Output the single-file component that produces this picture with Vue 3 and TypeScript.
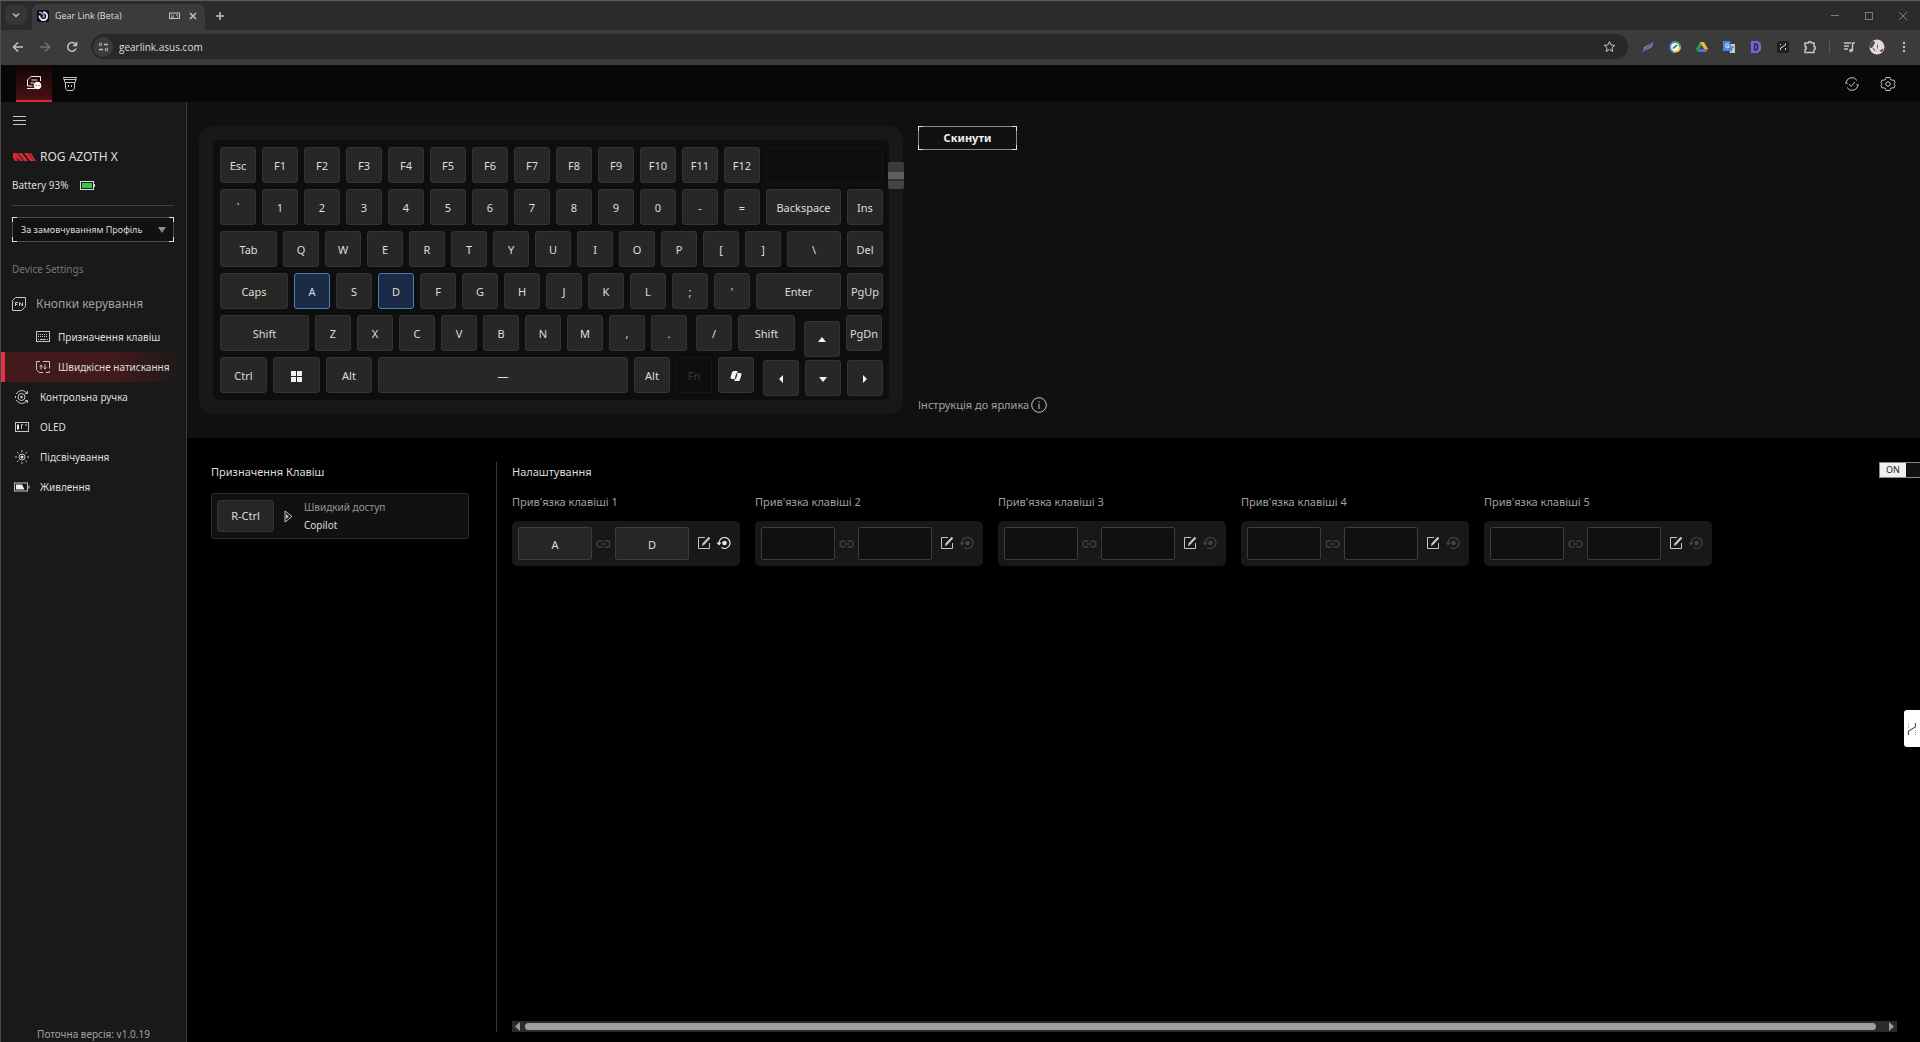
<script setup lang="ts">
import { ref } from 'vue'

interface Key {
  label: string
  width?: number
  kind?: 'win' | 'copilot' | 'up' | 'down' | 'left' | 'right' | 'blank' | 'disabled'
  spaced?: boolean
}

const plain = (labels: string): Key[] => labels.split(' ').map((label) => ({ label }))

const rows: Key[][] = [
  [...plain('Esc F1 F2 F3 F4 F5 F6 F7 F8 F9 F10 F11 F12'), { label: 'OLED', width: 117, kind: 'blank' }],
  [...plain('` 1 2 3 4 5 6 7 8 9 0 - ='), { label: 'Backspace', width: 75 }, { label: 'Ins' }],
  [{ label: 'Tab', width: 57 }, ...plain('Q W E R T Y U I O P [ ]'), { label: '\\', width: 54 }, { label: 'Del' }],
  [{ label: 'Caps', width: 68 }, ...plain("A S D F G H J K L ; '"), { label: 'Enter', width: 85 }, { label: 'PgUp' }],
  [
    { label: 'Shift', width: 89 },
    ...plain('Z X C V B N M , .'),
    { label: '/', spaced: true },
    { label: 'Shift', width: 57 },
    { label: 'Вгору', kind: 'up', spaced: true },
    { label: 'PgDn' },
  ],
  [
    { label: 'Ctrl', width: 47 },
    { label: 'Windows', width: 47, kind: 'win' },
    { label: 'Alt', width: 46 },
    { label: '—', width: 250 },
    { label: 'Alt' },
    { label: 'Fn', kind: 'disabled' },
    { label: 'Copilot', kind: 'copilot' },
    { label: 'Ліворуч', kind: 'left', spaced: true },
    { label: 'Униз', kind: 'down' },
    { label: 'Праворуч', kind: 'right' },
  ],
]

const arrows: Record<string, string> = {
  up: 'M2 8 6 3l4 5z',
  down: 'M2 4l4 5 4-5z',
  left: 'M8 2 4 6l4 4z',
  right: 'M4 2l4 4-4 4z',
}

const pairs = [
  { id: 1, a: 'A', b: 'D' },
  { id: 2, a: '', b: '' },
  { id: 3, a: '', b: '' },
  { id: 4, a: '', b: '' },
  { id: 5, a: '', b: '' },
]

const bound = (label: string) => pairs.some((p) => p.a === label || p.b === label)

const url = ref('gearlink.asus.com')
const enabled = ref(true)
</script>

<template>
  <div class="window">
    <header class="tabstrip">
      <button class="tab-search" aria-label="Пошук вкладок">
        <svg width="10" height="10" viewBox="0 0 10 10"><path d="M2 3.5 5 6.5 8 3.5" class="line bold" /></svg>
      </button>
      <div class="tab">
        <svg width="12" height="12" viewBox="0 0 12 12">
          <rect width="12" height="12" rx="2" fill="#08060f" />
          <path d="M2.500 5.500v2L5 10h3l2-2V4.500L8 2.500H6" fill="none" stroke="#e9e6f5" stroke-width="1.800" />
          <path d="M2 2.500h2L7 5.500V7H5.500" fill="none" stroke="#b79bf0" stroke-width="1.300" />
        </svg>
        <span class="tab-title">Gear Link (Beta)</span>
        <svg width="11" height="8" viewBox="0 0 11 8">
          <rect x=".5" y="1" width="10" height="5.500" class="line" />
          <path d="M2 3h1M4 3h1M2 5h3M7 3h2M8 5h1" class="line" />
        </svg>
        <button class="bare tab-close" aria-label="Закрити вкладку">
          <svg width="8" height="8" viewBox="0 0 8 8"><path d="M1 1l6 6M7 1 1 7" class="line bold" /></svg>
        </button>
      </div>
      <button class="bare new-tab" aria-label="Нова вкладка">
        <svg width="10" height="10" viewBox="0 0 10 10"><path d="M5 1v8M1 5h8" class="line bold" /></svg>
      </button>
      <div class="window-controls">
        <button class="bare" aria-label="Згорнути"><svg width="10" height="10" viewBox="0 0 10 10"><path d="M1 4.500h8" class="line" /></svg></button>
        <button class="bare" aria-label="Розгорнути"><svg width="10" height="10" viewBox="0 0 10 10"><rect x="1.500" y="1.500" width="7" height="7" class="line" /></svg></button>
        <button class="bare" aria-label="Закрити"><svg width="10" height="10" viewBox="0 0 10 10"><path d="M1 1l8 8M9 1 1 9" class="line" /></svg></button>
      </div>
    </header>

    <nav class="toolbar">
      <button class="bare" aria-label="Назад"><svg width="12" height="12" viewBox="0 0 12 12"><path d="M11 6H2M6 1.500 1.500 6 6 10.500" class="line bold" /></svg></button>
      <button class="bare faded" aria-label="Вперед"><svg width="12" height="12" viewBox="0 0 12 12"><path d="M1 6h9M6 1.500 10.500 6 6 10.500" class="line bold" /></svg></button>
      <button class="bare" aria-label="Оновити"><svg width="12" height="12" viewBox="0 0 12 12"><path d="M10 7.500A4.300 4.300 0 1 1 9.200 3L10.300 4.200M10.500 1v3.500H7" class="line bold" /></svg></button>
      <div class="address">
        <button class="site-info" aria-label="Відомості про сайт">
          <svg width="11" height="10" viewBox="0 0 11 10">
            <circle cx="2.500" cy="2.500" r="1.300" class="line" /><path d="M6 2.500h4M1 7.500h4" class="line bold" /><circle cx="8.500" cy="7.500" r="1.300" class="line" />
          </svg>
        </button>
        <input v-model="url" aria-label="Адреса" spellcheck="false" />
        <button class="bare star" aria-label="Додати закладку">
          <svg width="13" height="13" viewBox="0 0 13 13"><path d="M6.500 1.500 8 5l3.800.300-2.900 2.500.9 3.700-3.300-2-3.300 2 .9-3.700L1.200 5.300 5 5z" class="line" /></svg>
        </button>
      </div>
      <div class="extensions">
        <button class="bare" aria-label="Перо"><svg width="14" height="14" viewBox="0 0 14 14"><path d="M1.500 12 3 7l9.500-5-1.500 5-6 3.500z" fill="#8f6cae" /><path d="M1 13 10 4" stroke="#55406b" /></svg></button>
        <button class="bare" aria-label="Перевірка">
          <svg width="14" height="14" viewBox="0 0 14 14">
            <path d="M7 7V1a6 6 0 0 1 6 6z" fill="#3fae6b" /><path d="M7 7h6a6 6 0 0 1-9 5z" fill="#f0c24b" /><path d="M7 7l-3 5A6 6 0 0 1 7 1z" fill="#3b8be0" />
            <circle cx="7" cy="7" r="4" fill="#f2f2ea" /><path d="M5 8.500 9 5" stroke="#415161" stroke-width="1.500" />
          </svg>
        </button>
        <button class="bare" aria-label="Диск">
          <svg width="14" height="14" viewBox="0 0 14 14"><path d="M5 2h4L5 8.500 3 12 1 9z" fill="#2f9e58" /><path d="M5 2h4l4 7H9z" fill="#f2b72e" /><path d="M3 12 5 9h8l-2 3z" fill="#3c7de0" /><path d="M9 9h4l-2 3z" fill="#dd4b3e" /></svg>
        </button>
        <button class="bare" aria-label="Перекладач">
          <svg width="14" height="14" viewBox="0 0 14 14"><path d="M6 4h7v9H8z" fill="#c8ccd2" /><path d="M1 1h7l2 10H1z" fill="#4a86e0" /><path d="M7 4.500A2 2 0 1 0 7 7V6H5" fill="none" stroke="#e8effb" /><path d="M9 7h3M11 7l-2 3" stroke="#667" /></svg>
        </button>
        <button class="bare" aria-label="Нотатки"><svg width="14" height="14" viewBox="0 0 14 14"><path d="M2 1h7l3 3v6l-3 3H2z" fill="#7764dc" /><path d="M5.500 4h2l1 1.500v3l-1 1.500h-2z" fill="none" stroke="#2b2748" stroke-width="1.500" /></svg></button>
        <button class="bare" aria-label="Розширення"><svg width="14" height="14" viewBox="0 0 14 14"><rect x="1" y="1" width="12" height="12" rx="2" fill="#1d2025" /><path d="M4.500 4v1M4.500 10V8l5-3V3.500M9.500 8v2" fill="none" stroke="#e2e2e2" /></svg></button>
        <button class="bare" aria-label="Усі розширення"><svg width="14" height="14" viewBox="0 0 14 14"><path d="M2 3h3.500a1.500 1.500 0 0 1 3 0H11v3.500a1.500 1.500 0 0 1 0 3V12.500H2V9.500a1.500 1.500 0 0 0 0-3z" class="line bold" /></svg></button>
        <span class="separator"></span>
        <button class="bare" aria-label="Медіа"><svg width="13" height="12" viewBox="0 0 13 12"><path d="M1 2h7M1 5h5M1 8h4M9.500 9.500V2H12" class="line bold" /><circle cx="8" cy="9.500" r="1.800" fill="#c2c2c2" /></svg></button>
        <button class="bare" aria-label="Профіль">
          <svg width="16" height="16" viewBox="0 0 16 16"><circle cx="8" cy="8" r="7.500" fill="#e0dbd9" /><path d="M1 6c1-3 2-4 4-4l1 2-3 5C1 9 0 8 1 6z" fill="#5a4444" /><path d="M8 5l1 2-1 4z" fill="#4a4143" /><path d="M4 9l2 3" stroke="#a03a3f" /><path d="M10.500 12l4-3-1.500 4z" fill="#4a4143" /></svg>
        </button>
        <button class="bare" aria-label="Меню"><svg width="4" height="12" viewBox="0 0 4 12" fill="#c2c2c2"><circle cx="2" cy="2" r="1.200" /><circle cx="2" cy="6" r="1.200" /><circle cx="2" cy="10" r="1.200" /></svg></button>
      </div>
    </nav>

    <header class="app-bar">
      <button class="app-tab current" aria-label="Пристрої">
        <svg width="16" height="16" viewBox="0 0 16 16">
          <path d="M6.500 11H1.500V5L5 1.500h9.500V6M1 13.500h8M5.500 5H11M4.500 8H8" class="line white" />
          <circle cx="11.500" cy="10.500" r="3.800" fill="#f4f4f4" /><path d="M9.500 10.500h1M12.500 10.500h1" stroke="#7a1a20" />
        </svg>
      </button>
      <button class="app-tab" aria-label="Прошивка">
        <svg width="16" height="16" viewBox="0 0 16 16"><path d="M1.500 1.500h13L13 6.500H3zM2 3.500h12M3.500 6.500h9v6L11 14.500H5l-1.500-2zM6.500 9v2M9.500 9v2" class="line" /></svg>
      </button>
      <div class="app-actions">
        <button class="bare" aria-label="Оновлення">
          <svg width="16" height="16" viewBox="0 0 16 16"><path d="M2 6.500A6 6 0 0 1 13 4.500M14 9.500A6 6 0 0 1 3 11.500M1 7.500l1.500-1 1 1.500M15 8.500l-1.500 1-1-1.500M5 8l2 2.500L11 6" class="line" /></svg>
        </button>
        <button class="bare" aria-label="Параметри">
          <svg width="16" height="16" viewBox="0 0 16 16"><path d="M6 1.500h4l.5 2 2 .800 1.500-.300 1 2.500-1.200 1.500 1.200 1.500-1 2.500-1.500-.300-2 .800-.5 2H6l-.5-2-2-.800-1.500.300-1-2.500L2.200 8 1 6.500 2 4l1.500.300 2-.800z" class="line" /><circle cx="8" cy="8" r="2.300" class="line" /></svg>
        </button>
      </div>
    </header>

    <div class="body">
      <aside class="sidebar">
        <button class="bare burger" aria-label="Згорнути меню"><svg width="13" height="11" viewBox="0 0 13 11"><path d="M0 1.500h13M0 5.500h13M0 9.500h13" class="line" /></svg></button>
        <h1 class="device">
          <svg width="24" height="10" viewBox="0 0 24 10" fill="#d9273a"><path d="M1 1h4l6 8H8L4 5l2 4H3L1 6z" /><path d="M6 1h4l6 8h-4z" /><path d="M12 1h4l6 8h-4z" /><path d="M17 1h2l5 8h-2z" /></svg>
          ROG AZOTH X
        </h1>
        <p class="battery">
          Battery 93%
          <svg width="15" height="9" viewBox="0 0 15 9"><rect x=".5" y=".5" width="13" height="8" fill="none" stroke="#ddd" /><rect x="2" y="2" width="10" height="5" fill="#35c84d" /><path d="M14.500 3v3" stroke="#ddd" /></svg>
        </p>
        <hr />
        <div class="profile corners">
          <select aria-label="Профіль"><option>За замовчуванням Профіль</option></select>
          <svg width="8" height="6" viewBox="0 0 8 6"><path d="M0 0h8L4 6z" fill="#8d8d8d" /></svg>
        </div>
        <h2 class="section">Device Settings</h2>
        <nav class="menu">
          <a href="#keys" class="group">
            <svg width="14" height="14" viewBox="0 0 14 14"><path d="M3.500.5h10v9l-4 4h-9v-10z" class="line" /><path d="M3.500 9V5.500H6M3.500 7.300h2M7.500 9V5.500l3 3.500V5.500" class="line" /></svg>
            Кнопки керування
          </a>
          <a href="#assign" class="sub">
            <svg width="14" height="12" viewBox="0 0 14 12"><rect x=".5" y=".5" width="13" height="10" class="line" /><path d="M2 3.500h10M2 5.500h10" class="line" stroke-dasharray="1 1" /><path d="M2 8.500h1M4 8.500h6M11 8.500h1" class="line" /></svg>
            Призначення клавіш
          </a>
          <a href="#speed" class="sub active">
            <svg width="14" height="12" viewBox="0 0 14 12"><path d="M4 .5H.5v8l2.500 3h4M7 .5h6.500v7M10 11.500h3.500V10" class="line" /><path d="M5 8.500V4M3.500 5.500 5 4l1.500 1.500M9 3.500V8M7.500 6.500 9 8l1.500-1.500" class="line" /></svg>
            Швидкісне натискання
          </a>
          <a href="#knob">
            <svg width="16" height="14" viewBox="0 0 16 14"><circle cx="7.500" cy="7" r="3.500" class="line" /><circle cx="7.500" cy="7" r="1.200" fill="#ddd" /><path d="M2 4Q7-2.500 13 3M2 10q5 6.500 11 1M13.500 1v2.500H11M13.500 13v-2.500H11M1.500 6v2" class="line" /></svg>
            Контрольна ручка
          </a>
          <a href="#oled">
            <svg width="16" height="10" viewBox="0 0 16 10"><rect x="1.500" y=".5" width="13" height="9" class="line" /><path d="M4 2.500v5" stroke="#eee" stroke-width="2" /><path d="M7.500 7V2.500H9M11 3h2" class="line" /></svg>
            OLED
          </a>
          <a href="#light">
            <svg width="16" height="14" viewBox="0 0 16 14"><circle cx="8" cy="7" r="3" class="line" /><circle cx="8" cy="7" r="1.500" fill="#eee" /><path d="M8 0v2M8 12v2M1 7h2M13 7h2M3 2l1.500 1.500M13 2l-1.500 1.500M3 12l1.500-1.500M13 12l-1.500-1.500" class="line" /></svg>
            Підсвічування
          </a>
          <a href="#power">
            <svg width="16" height="10" viewBox="0 0 16 10"><rect x=".5" y="1" width="13" height="8" class="line" /><path d="M2 2.500h6L10.500 7.500H2z" fill="#eee" /><path d="M15 3.500v3" class="line" /></svg>
            Живлення
          </a>
        </nav>
        <p class="version">Поточна версія: v1.0.19</p>
      </aside>

      <main class="content">
        <section class="stage">
          <div class="keyboard">
            <div class="plate">
              <div v-for="(row, r) in rows" :key="r" class="row">
                <button
                  v-for="(key, k) in row"
                  :key="k"
                  class="key"
                  :class="[key.kind, { spaced: key.spaced, bound: bound(key.label) }]"
                  :style="key.width ? { width: key.width + 'px' } : undefined"
                  :aria-label="key.label"
                  :disabled="key.kind === 'disabled' || key.kind === 'blank'"
                >
                  <svg v-if="key.kind === 'win'" width="11" height="11" viewBox="0 0 11 11" fill="#efefef"><path d="M0 0h5v5H0zM6 0h5v5H6zM0 6h5v5H0zM6 6h5v5H6z" /></svg>
                  <svg v-else-if="key.kind === 'copilot'" width="12" height="12" viewBox="0 0 12 12" fill="#f4f4f4">
                    <path d="M3.500 1h4.200L5.500 9H2Q0 9 .600 7L2 2.500Q2.500 1 3.500 1z" /><path d="M8.500 11H4.300L6.500 3H10q2 0 1.400 2L10 9.500Q9.500 11 8.500 11z" />
                    <path d="M7 3.500 5.300 8.800" stroke="#2a2a2a" stroke-width="1.300" />
                  </svg>
                  <svg v-else-if="key.kind && arrows[key.kind]" width="12" height="12" viewBox="0 0 12 12"><path :d="arrows[key.kind]" fill="#f2f2f2" /></svg>
                  <template v-else-if="key.kind !== 'blank'">{{ key.label }}</template>
                </button>
              </div>
            </div>
            <span class="dial"></span>
          </div>
          <div class="stage-side">
            <button class="reset corners">Скинути</button>
            <p class="guide">
              Інструкція до ярлика
              <svg width="16" height="16" viewBox="0 0 16 16"><circle cx="8" cy="8" r="7.300" class="line" /><path d="M8 6.500V12M8 4v1.200" class="line" /></svg>
            </p>
          </div>
        </section>

        <section class="panels">
          <div class="assigned">
            <h2>Призначення Клавіш</h2>
            <div class="shortcut">
              <span class="cap">R-Ctrl</span>
              <svg width="9" height="13" viewBox="0 0 9 13"><path d="M1 1l7 5.500L1 12z" class="line" /><path d="M2 4v5l3-2.500z" fill="#c4c4c4" /></svg>
              <div>
                <p class="dim">Швидкий доступ</p>
                <p>Copilot</p>
              </div>
            </div>
          </div>
          <div class="settings">
            <div class="settings-head">
              <h2>Налаштування</h2>
              <label class="toggle"><input v-model="enabled" type="checkbox" /><span>ON</span></label>
            </div>
            <div class="pairs">
              <div v-for="pair in pairs" :key="pair.id" class="pair">
                <h3>Прив'язка клавіші {{ pair.id }}</h3>
                <div class="pair-box">
                  <button class="slot" :class="{ filled: pair.a }" :aria-label="'Перша клавіша ' + pair.id">{{ pair.a }}</button>
                  <svg class="chain" width="15" height="10" viewBox="0 0 15 10"><path d="M6.500 2H4a3 3 0 0 0 0 6h2.500M8.500 2H11a3 3 0 0 1 0 6H8.500M5 5h5" /></svg>
                  <button class="slot" :class="{ filled: pair.b }" :aria-label="'Друга клавіша ' + pair.id">{{ pair.b }}</button>
                  <button class="bare edit" aria-label="Редагувати"><svg width="14" height="14" viewBox="0 0 14 14"><path d="M8 1.500H1.500v11h11V7" class="line" /><path d="M6 8.500 12.500 1.500" stroke="#c9c9c9" stroke-width="2.200" /><path d="M4.800 10l.7-2 1.300 1.200z" fill="#c9c9c9" /></svg></button>
                  <button class="bare revert" :class="{ off: !pair.a }" aria-label="Скинути пару">
                    <svg width="16" height="14" viewBox="0 0 16 14"><path d="M3 7A5.500 5.500 0 1 1 5.500 11.600" fill="none" stroke="currentColor" stroke-width="1.200" /><path d="M.500 6.500h5L3 9.500z" fill="currentColor" /><circle cx="8.500" cy="7" r="2.300" fill="currentColor" /></svg>
                  </button>
                </div>
              </div>
            </div>
            <div class="scroller">
              <svg width="7" height="9" viewBox="0 0 7 9"><path d="M6 0v9L1 4.500z" fill="#9a9a9a" /></svg>
              <span class="thumb"></span>
              <svg width="7" height="9" viewBox="0 0 7 9"><path d="M1 0v9l5-4.500z" fill="#9a9a9a" /></svg>
            </div>
          </div>
        </section>
      </main>
    </div>

    <button class="side-tab" aria-label="Бічна панель">
      <svg width="10" height="14" viewBox="0 0 10 14"><path d="M1.500 13V9L8.500 5V1" fill="none" stroke="#555" stroke-width="1.200" /><path d="M1.500 1v6M8.500 8v5" stroke="#999" stroke-dasharray="1 1" /></svg>
    </button>
  </div>
</template>

<style>
html,
body {
  margin: 0;
  background: #000;
}
</style>

<style scoped>
* {
  box-sizing: border-box;
}

.window {
  position: relative;
  display: flex;
  flex-direction: column;
  height: 100vh;
  overflow: hidden;
  border-top: 1px solid #5b5e5e;
  border-left: 1px solid #4a4a4a;
  background: #000;
  color: #dedede;
  font: 12px/16px 'Noto Sans', 'Open Sans', sans-serif;
}

h1, h2, h3, p, hr {
  margin: 0;
  font-weight: 400;
}

button, input, select {
  margin: 0;
  padding: 0;
  border: 0;
  background: none;
  color: inherit;
  font: inherit;
}

svg {
  flex: none;
}

a {
  color: inherit;
  text-decoration: none;
}

.line {
  fill: none;
  stroke: #c4c4c4;
  stroke-width: 1;
}

.bold {
  stroke-width: 1.5;
}

.white {
  stroke: #f0f0f0;
}

.bare {
  display: flex;
  align-items: center;
  justify-content: center;
}

.tabstrip {
  display: flex;
  height: 29px;
  background: #2b2b2b;
}

.tab-search {
  display: flex;
  align-items: center;
  justify-content: center;
  width: 22px;
  height: 20px;
  margin: 4px 5px 0 4px;
  border-radius: 7px;
  background: #363636;
}

.tab {
  display: flex;
  align-items: center;
  gap: 6px;
  width: 173px;
  height: 26px;
  margin-top: 3px;
  padding: 0 5px 2px 5px;
  border-radius: 7px 7px 0 0;
  background: #3b3b3b;
  font-family: 'Open Sans', 'Noto Sans', sans-serif;
  font-size: 9px;
}

.tab-title {
  flex: 1;
}

.tab-close {
  width: 14px;
}

.new-tab {
  width: 30px;
}

.window-controls {
  display: flex;
  margin-left: auto;
}

.window-controls .bare {
  width: 34px;
}

.window-controls .line {
  stroke: #7c7c7c;
}

.toolbar {
  display: flex;
  align-items: center;
  height: 35px;
  padding: 0 3px 2px 3px;
  background: #3b3b3b;
}

.toolbar > .bare {
  width: 27px;
  height: 27px;
}

.faded {
  opacity: 0.4;
}

.address {
  display: flex;
  flex: 1;
  align-items: center;
  gap: 6px;
  height: 25px;
  margin: 0 6px;
  padding: 0 12px 0 2px;
  border-radius: 13px;
  background: #282828;
  font-family: 'Open Sans', 'Noto Sans', sans-serif;
  font-size: 10px;
}

.site-info {
  display: flex;
  align-items: center;
  justify-content: center;
  width: 20px;
  height: 20px;
  border-radius: 50%;
  background: #3b3b3b;
}

.address input {
  flex: 1;
  outline: 0;
}

.extensions {
  display: flex;
  align-items: center;
}

.extensions .bare {
  width: 27px;
  height: 27px;
}

.separator {
  width: 1px;
  height: 12px;
  margin: 0 6px;
  background: #5c5c5c;
}

.app-bar {
  display: flex;
  height: 37px;
  padding: 0 14px 0 15px;
  background: #070707;
}

.app-tab {
  display: flex;
  align-items: center;
  justify-content: center;
  width: 36px;
}

.app-tab.current {
  border-bottom: 2px solid #d42a3b;
  background: linear-gradient(#100506, #4a1015);
}

.app-actions {
  display: flex;
  margin-left: auto;
}

.app-actions .bare {
  width: 36px;
}

.body {
  display: flex;
  flex: 1;
  min-height: 0;
}

.sidebar {
  display: flex;
  flex: none;
  flex-direction: column;
  width: 186px;
  padding-top: 13px;
  border-right: 1px solid #3a3a3a;
  background: #191919;
}

.burger {
  width: 13px;
  height: 11px;
  margin-left: 12px;
}

.device {
  display: flex;
  align-items: center;
  gap: 4px;
  height: 18px;
  margin: 22px 0 0 11px;
  font-size: 12px;
}

.battery {
  display: flex;
  align-items: center;
  gap: 11px;
  margin: 11px 0 0 11px;
  font-size: 10px;
}

.sidebar hr {
  height: 1px;
  margin: 12px 12px 0 11px;
  border: 0;
  background: #404040;
}

.corners {
  --tip: linear-gradient(#e2e2e2, #e2e2e2);
  --edge: linear-gradient(#4c4c4c, #4c4c4c);
  background:
    var(--tip) 0 0 / 5px 1px,
    var(--tip) 0 0 / 1px 5px,
    var(--tip) 100% 0 / 5px 1px,
    var(--tip) 100% 0 / 1px 5px,
    var(--tip) 0 100% / 5px 1px,
    var(--tip) 0 100% / 1px 5px,
    var(--tip) 100% 100% / 5px 1px,
    var(--tip) 100% 100% / 1px 5px,
    var(--edge) 0 0 / 100% 1px,
    var(--edge) 0 100% / 100% 1px,
    var(--edge) 0 0 / 1px 100%,
    var(--edge) 100% 0 / 1px 100%;
  background-color: #111;
  background-repeat: no-repeat;
}

.profile {
  display: flex;
  align-items: center;
  height: 25px;
  margin: 11px 12px 0 11px;
  padding: 1px 8px 0 9px;
  font-size: 9px;
}

.profile select {
  flex: 1;
  min-width: 0;
  appearance: none;
  outline: 0;
}

.section {
  margin: 19px 0 0 11px;
  color: #777;
  font-size: 10px;
}

.menu {
  display: flex;
  flex-direction: column;
  margin-top: 9px;
  font-size: 10px;
}

.menu a {
  display: flex;
  align-items: center;
  gap: 10px;
  height: 30px;
  padding-left: 13px;
}

.menu .group {
  height: 36px;
  padding-left: 11px;
  color: #a0a0a0;
  font-size: 12px;
}

.menu .sub {
  gap: 8px;
  padding-left: 35px;
}

.menu .active {
  border-left: 4px solid #e03545;
  padding-left: 31px;
  background: linear-gradient(90deg, #431a1c 60%, #191919);
}

.version {
  margin: auto 0 0;
  color: #a0a0a0;
  font-size: 10px;
  text-align: center;
}

.content {
  display: flex;
  flex: 1;
  flex-direction: column;
  min-width: 0;
}

.stage {
  display: flex;
  gap: 15px;
  padding: 24px 12px 24px;
  background: #101010;
}

.keyboard {
  position: relative;
  padding: 14px;
  border-radius: 14px;
  background: #181818;
}

.plate {
  display: flex;
  flex-direction: column;
  gap: 6px;
  width: 676px;
  padding: 7px;
  border-radius: 6px;
  background: #0e0e0e;
}

.row {
  display: flex;
  align-items: flex-start;
  gap: 6px;
  height: 36px;
}

.key {
  display: flex;
  flex: none;
  align-items: center;
  justify-content: center;
  width: 36px;
  height: 36px;
  padding-top: 2px;
  border: 1px solid #343434;
  border-radius: 3px;
  background: #272727;
  font-size: 11px;
}

.spaced {
  margin-left: 3px;
}

.up {
  margin-top: 6px;
}

.left, .down, .right {
  margin-top: 3px;
}

.bound {
  border-color: #4a7cba;
  background: #1b2b45;
}

.blank, .disabled {
  border-color: #181818;
  background: #0e0e0e;
  color: #3a3a3a;
}

.dial {
  position: absolute;
  top: 36px;
  right: -1px;
  width: 16px;
  height: 27px;
  border-radius: 2px;
  background: linear-gradient(#3b3b3b 36%, #5f5f5f 36% 62%, #303030 62% 70%, #424242 70%);
}

.stage-side {
  display: flex;
  flex-direction: column;
  align-items: flex-start;
  justify-content: space-between;
}

.reset {
  --edge: linear-gradient(#8a8a8a, #8a8a8a);
  width: 99px;
  height: 24px;
  color: #f0f0f0;
  font-weight: 700;
  font-size: 11px;
}

.guide {
  display: flex;
  align-items: center;
  gap: 2px;
  margin-bottom: 1px;
  color: #a0a0a0;
  font-size: 11px;
}

.panels {
  display: flex;
  flex: 1;
  min-height: 0;
  padding: 24px 0 10px 24px;
}

.assigned {
  flex: none;
  width: 286px;
  border-right: 1px solid #383838;
}

h2 {
  font-size: 11px;
}

.shortcut {
  display: flex;
  align-items: center;
  width: 258px;
  height: 46px;
  margin-top: 13px;
  padding-left: 5px;
  border: 1px solid #2c2c2c;
  border-radius: 3px;
  background: #111;
  font-size: 10px;
}

.shortcut svg {
  margin: 0 11px 0 10px;
}

.shortcut p {
  line-height: 18px;
}

.dim {
  color: #979797;
}

.cap {
  width: 57px;
  border: 1px solid #343434;
  border-radius: 3px;
  background: #262626;
  font-size: 11px;
  line-height: 30px;
  text-align: center;
}

.assigned h2 {
  padding-top: 2px;
}

.settings {
  display: flex;
  flex: 1;
  flex-direction: column;
  min-width: 0;
  padding-left: 15px;
}

.settings-head {
  display: flex;
  justify-content: space-between;
}

.settings-head h2 {
  padding-top: 2px;
}

.toggle {
  display: flex;
  width: 53px;
  height: 16px;
  margin-right: -12px;
  border: 1px solid #8a8a8a;
  background: #111;
}

.toggle input {
  width: 0;
  height: 0;
  appearance: none;
}

.toggle span {
  width: 26px;
  background: #f0f0f0;
  color: #222;
  font-size: 9px;
  line-height: 14px;
  text-align: center;
}

.pairs {
  display: flex;
  gap: 15px;
  margin-top: 14px;
}

.pair {
  flex: none;
  width: 228px;
}

h3 {
  color: #a0a0a0;
  font-size: 11px;
}

.pair-box {
  display: flex;
  align-items: center;
  height: 45px;
  margin-top: 11px;
  padding-left: 6px;
  border-radius: 5px;
  background: #181818;
}

.slot {
  width: 74px;
  height: 33px;
  padding-top: 2px;
  border: 1px solid #3c3c3c;
  border-radius: 2px;
  background: #101010;
  font-size: 11px;
}

.filled {
  background: #262626;
}

.chain {
  margin: 0 4px;
  fill: none;
  stroke: #3e3e3e;
  stroke-width: 1.5;
}

.edit,
.revert {
  padding-bottom: 2px;
}

.edit {
  margin-left: 8px;
}

.revert {
  margin-left: 5px;
  color: #e6e6e6;
}

.off {
  color: #444;
}

.scroller {
  display: flex;
  align-items: center;
  gap: 4px;
  height: 11px;
  margin: auto 23px 0 0;
  padding: 0 2px;
  background: #2b2b2b;
}

.thumb {
  flex: 1;
  height: 7px;
  margin-right: 8px;
  border-radius: 4px;
  background: #9f9f9f;
}

.side-tab {
  position: absolute;
  top: 709px;
  right: 0;
  display: flex;
  align-items: center;
  justify-content: center;
  width: 16px;
  height: 37px;
  border-radius: 3px 0 0 3px;
  background: #fff;
}
</style>
